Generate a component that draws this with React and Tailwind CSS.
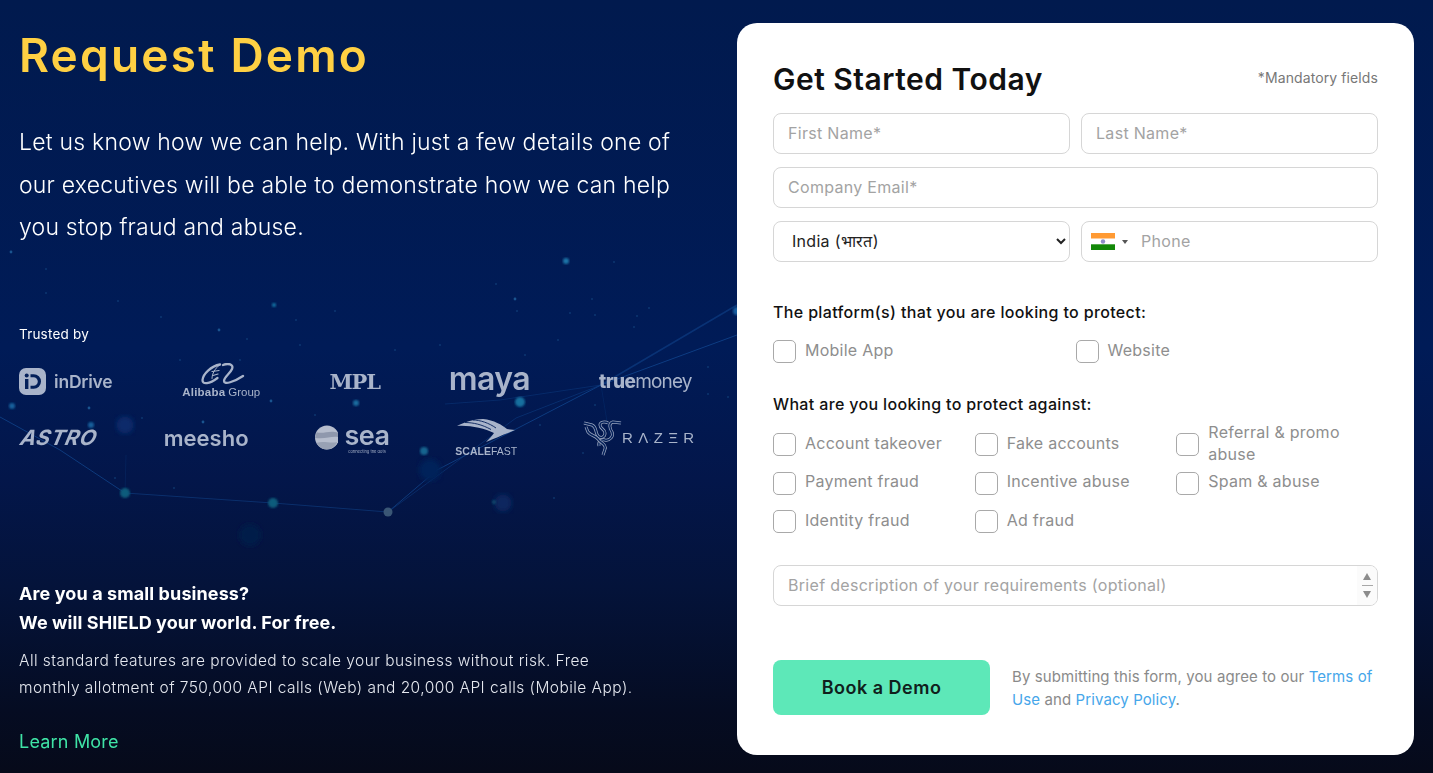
import { useState } from "react";

const stars = [
  [11, 252, 2], [46, 269, 1], [46, 293, 1], [118, 301, 1], [219, 330, 2], [247, 339, 1], [496, 284, 1],
  [515, 299, 2], [517, 311, 1], [525, 355, 1], [558, 340, 1], [614, 262, 1], [592, 299, 1], [570, 313, 1],
  [595, 315, 1], [634, 327, 1], [637, 316, 1], [649, 308, 1], [180, 360, 1], [161, 317, 1], [296, 320, 1],
  [335, 311, 1], [708, 367, 1], [708, 394, 1], [728, 397, 1], [89, 408, 2], [142, 418, 1], [203, 422, 2],
  [271, 401, 2], [583, 453, 1], [315, 415, 1], [554, 498, 1], [595, 405, 1], [174, 488, 1], [115, 478, 1],
  [240, 360, 1], [300, 345, 1], [395, 350, 1], [440, 345, 1], [490, 440, 1], [540, 425, 1], [650, 440, 1],
];
const glows = [
  [12, 406, 3, "#14609c"], [125, 425, 9, "#07296b"], [91, 425, 3, "#14609c"], [520, 402, 5, "#16709f"],
  [424, 451, 4, "#14658f"], [356, 403, 3, "#1a6da0"], [274, 305, 2, "#1a78a8"], [566, 261, 3, "#1f74a8"],
  [737, 311, 4, "#175fa0"], [503, 503, 9, "#07265e"], [125, 493, 5, "#0f5c7c"], [273, 503, 5, "#0f5c7c"],
  [494, 502, 2, "#0f4c70"], [250, 535, 11, "#051b4a"], [430, 470, 11, "#06225a"],
];

function Backdrop() {
  return (
    <svg className="absolute left-0 top-0 h-[773px] w-[737px]" viewBox="0 0 737 773" fill="none">
      <defs>
        <filter id="soft"><feGaussianBlur stdDeviation="1.2" /></filter>
        <filter id="softer"><feGaussianBlur stdDeviation="2.6" /></filter>
      </defs>
      <g stroke="#1858a6" strokeWidth="1" opacity="0.55">
        <path d="M601 385 737 335" />
        <path d="M601 385 737 305" strokeWidth="1.6" opacity="0.7" />
        <path d="M601 385 500 400 445 404" opacity="0.5" />
        <path d="M601 385 437 470 388 512" />
        <path d="M388 512 516 418 601 385" opacity="0.6" />
        <path d="M388 512 273 503 125 493" opacity="0.7" />
        <path d="M125 493 60 450 0 417" />
        <path d="M601 385 610 440" opacity="0.3" />
        <path d="M125 493 126 455" opacity="0.3" />
      </g>
      {glows.map(([x, y, r, c], i) => (
        <circle key={i} cx={x} cy={y} r={r} fill={c} filter={r > 6 ? "url(#softer)" : "url(#soft)"} />
      ))}
      {stars.map(([x, y, r], i) => (
        <circle key={i} cx={x} cy={y} r={r * 0.7} fill="#1a548f" />
      ))}
      <circle cx="388" cy="512" r="4.5" fill="#3a5675" />
    </svg>
  );
}

function InDrive() {
  return (
    <div className="flex w-[94px] items-center gap-[8px]">
      <svg width="27" height="27" viewBox="0 0 27 27">
        <rect width="27" height="27" rx="7" fill="#a9b4ca" />
        <rect x="6" y="11" width="3.4" height="10" fill="#04205a" />
        <circle cx="7.7" cy="7.6" r="2" fill="#04205a" />
        <path d="M11.5 6.2h3.2a7.3 7.3 0 0 1 0 14.6h-3.2v-3h3a4.3 4.3 0 0 0 0-8.6h-3z" fill="#04205a" />
      </svg>
      <span className="text-[17.5px] font-semibold leading-none tracking-[-0.2px]">inDrive</span>
    </div>
  );
}

function Alibaba() {
  return (
    <div className="flex h-[38px] w-[80px] flex-col items-center">
      <svg className="ml-[3px]" width="44" height="23" viewBox="0 0 44 23" fill="none" stroke="#a9b4ca" strokeLinecap="round">
        <path d="M19 1.5C10 3 2 11 1.5 17c-.3 5 7 4 15-2" strokeWidth="2.3" />
        <path d="M19 1.5c-5 4-8 9-8 14" strokeWidth="1" />
        <path d="M11 8.5l7-1M12 12.5l5-1.5" strokeWidth="1.2" />
        <path d="M22 2c5-2 11-1 9 4-1.500 4-8 8-8 12 0 4 10 1 19-5" strokeWidth="2.3" />
      </svg>
      <div className="mt-[1px] flex items-baseline whitespace-nowrap font-['Liberation_Sans',sans-serif] text-[11.5px] leading-none">
        <span className="font-bold tracking-[0.2px]">Alibaba</span>
        <span className="ml-[3px] text-[11.5px]">Group</span>
      </div>
    </div>
  );
}

function Mpl() {
  return (
    <span className="w-[51px] font-['DejaVu_Serif',serif] text-[21px] font-bold leading-none tracking-[-1.2px]">MPL</span>
  );
}

function Maya() {
  return <span className="-mt-[5px] w-[82px] text-[32px] font-semibold leading-none tracking-[-0.6px]">maya</span>;
}

function TrueMoney() {
  return (
    <div className="flex w-[93px] items-baseline whitespace-nowrap leading-none">
      <span className="text-[19px] font-extrabold tracking-[-0.6px]">true</span>
      <span className="text-[19px] tracking-[-0.9px]">money</span>
    </div>
  );
}

function Astro() {
  return (
    <span className="ml-[2px] w-[76px] text-[21px] font-bold italic leading-none tracking-[0.6px] [transform:skewX(-14deg)]">ASTRO</span>
  );
}

function Meesho() {
  return <span className="w-[84px] text-[22px] font-semibold leading-none">meesho</span>;
}

function Sea() {
  return (
    <div className="flex w-[75px] items-center gap-[6px]">
      <svg width="29" height="29" viewBox="0 0 29 29">
        <circle cx="14.5" cy="14.5" r="14.5" fill="#b6bdcd" />
        <path d="M2 8c8 3 16-3 26 1l1 5c-9-2-16 3-29 1z" fill="#8f98ad" />
        <path d="M2 21c8-3 16 1 25-1-3 6-8 9-13 9-5 0-10-3-12-8z" fill="#98a1b4" />
      </svg>
      <div className="flex flex-col items-center pt-[2px]">
        <span className="text-[27px] font-semibold leading-[26px] tracking-[-0.5px]">sea</span>
        <span className="whitespace-nowrap text-[4px] leading-[5px]">connecting the dots</span>
      </div>
    </div>
  );
}

function Scalefast() {
  return (
    <div className="flex h-[38px] w-[60px] flex-col items-center">
      <svg width="60" height="25" viewBox="0 0 60 25">
        <path d="M1 7C9 3 18 0 27 0c11 1 19 6 24 10l8 1-7 3c-6 2-14 6-22 9 3-3 6-6 8-9C28 9 13 6 1 7z" fill="#a9b4ca" />
        <path d="M9 3.500c8 0 17 2 26 7M17 1c7 0 16 3 23 8" stroke="#04205a" strokeWidth="0.9" fill="none" />
      </svg>
      <div className="mt-[2px] whitespace-nowrap font-['Liberation_Sans',sans-serif] text-[10.5px] leading-none">
        <span className="font-bold">SCALE</span>FAST
      </div>
    </div>
  );
}

const razerCoils = [
  "M1 4 9 6C14 8 12 14 15 17 18 20 22 18 22 14 22 10 17 10 17 6 17 3 22 2 25 4",
  "M38 4 30 3C25 4 27 10 29 13 31 17 27 22 22 21 18 20 15 23 16 27",
  "M20 36 22 30C24 25 17 24 15 20 12 16 8 17 5 13L3 8",
];

function Razer() {
  return (
    <div className="flex w-[109px] items-center">
      <svg className="shrink-0" width="39" height="38" viewBox="0 0 39 38" fill="none">
        {razerCoils.map((d) => (
          <g key={d}>
            <path d={d} stroke="#98a4bd" strokeWidth="3" />
            <path d={d} stroke="#04205a" strokeWidth="1.5" />
          </g>
        ))}
      </svg>
      <span className="whitespace-nowrap font-['Liberation_Sans',sans-serif] text-[15px] leading-none tracking-[5.4px]">RΛZΞR</span>
    </div>
  );
}

function IndiaFlag() {
  return (
    <svg width="24" height="17" viewBox="0 0 24 17">
      <rect width="24" height="5.7" fill="#ff9a33" />
      <rect y="5.7" width="24" height="5.6" fill="#ffffff" />
      <rect y="11.3" width="24" height="5.7" fill="#138808" />
      <circle cx="12" cy="8.5" r="2.2" fill="#8f8fc9" />
    </svg>
  );
}

function CheckItem({ label, checked, onChange }) {
  return (
    <label className="flex items-center gap-[9px] text-[16px] leading-[22px] tracking-[0.25px] text-[#8e8e8e]">
      <input
        type="checkbox"
        checked={checked}
        onChange={onChange}
        className="h-[23px] w-[23px] shrink-0 appearance-none rounded-[5px] border border-[#a9a9a9] bg-white checked:bg-[#5de8b8]"
      />
      <span className="-mb-[9px] -mt-[13px]">{label}</span>
    </label>
  );
}

const inputClass =
  "h-[41px] w-full rounded-[8px] border border-[#d6d6d6] bg-white px-[14px] pb-[2px] text-[16px] tracking-[0.3px] text-[#333] outline-none placeholder:text-[#a3a3a3]";

const platforms = ["Mobile App", "Website"];
const threats = [
  "Account takeover", "Fake accounts", "Referral & promo abuse",
  "Payment fraud", "Incentive abuse", "Spam & abuse",
  "Identity fraud", "Ad fraud",
];

function App() {
  const [checked, setChecked] = useState({});

  const toggle = (name) => {
    setChecked({ ...checked, [name]: !checked[name] });
  };

  return (
    <div className="relative flex h-[773px] w-full overflow-hidden bg-[linear-gradient(180deg,#011a4e_0%,#001b57_45%,#03164a_62%,#04133a_76%,#050c22_92%,#060a1a_100%)] font-['Inter',sans-serif]">
      <Backdrop />

      {/* left column */}
      <div className="relative flex w-[737px] shrink-0 flex-col pl-[19px] pr-[45px] text-white">
        <h1 className="mt-[26px] text-[46px] font-semibold leading-[58px] tracking-[2.2px] text-[#ffd043]">Request Demo</h1>
        <p className="mt-[37px] text-[23px] font-light leading-[42.5px] tracking-[0.22px]">
          Let us know how we can help. With just a few details one of our executives will be able to demonstrate how we can help you stop fraud and abuse.
        </p>

        <div className="mt-[75px] text-[13.5px] leading-[20px] tracking-[0.2px]">Trusted by</div>
        <div className="mt-[18px] flex flex-col gap-[16px] text-[#a9b4ca]">
          <div className="flex h-[40px] items-center justify-between">
            <InDrive />
            <Alibaba />
            <Mpl />
            <Maya />
            <TrueMoney />
          </div>
          <div className="flex h-[40px] items-center justify-between">
            <Astro />
            <Meesho />
            <Sea />
            <Scalefast />
            <Razer />
          </div>
        </div>

        <div className="mt-[121px] text-[18px] font-bold leading-[29px] tracking-[0.1px]">
          Are you a small business?
          <br />
          We will SHIELD your world. For free.
        </div>
        <p className="mt-[10px] max-w-[615px] text-[15.5px] font-light leading-[27px] tracking-[0.45px] text-[#e6e9f0]">
          All standard features are provided to scale your business without risk. Free monthly allotment of 750,000 API calls (Web) and 20,000 API calls (Mobile App).
        </p>
        <a href="#learn" className="mt-[27px] text-[18px] leading-[28px] tracking-[0.2px] text-[#3fe3a6]">Learn More</a>
      </div>

      {/* form card */}
      <div className="relative mt-[23px] h-[732px] w-[677px] rounded-[20px] bg-white px-[36px] pt-[36px]">
        <form noValidate onSubmit={(e) => e.preventDefault()}>
          <div className="flex h-[40px] items-center justify-between">
            <h2 className="text-[30px] font-semibold leading-[40px] tracking-[0.5px] text-[#111]">Get Started Today</h2>
            <span className="pb-[3px] text-[14px] tracking-[0.1px] text-[#777]">*Mandatory fields</span>
          </div>

          <div className="mt-[14px] flex flex-col gap-[13px]">
            <div className="grid grid-cols-2 gap-[11px]">
              <input className={inputClass} type="text" placeholder="First Name*" />
              <input className={inputClass} type="text" placeholder="Last Name*" />
            </div>
            <input className={inputClass} type="email" placeholder="Company Email*" />
            <div className="grid grid-cols-2 gap-[11px]">
              <select className="h-[41px] w-full rounded-[8px] border border-[#d6d6d6] bg-white px-[14px] pb-[2px] text-[16px] tracking-[0.3px] text-[#222] outline-none" defaultValue="India">
                <option value="India">India (भारत)</option>
              </select>
              <div className="flex h-[41px] items-center rounded-[8px] border border-[#d6d6d6] bg-white pl-[9px]">
                <IndiaFlag />
                <span className="ml-[7px] h-0 w-0 border-x-[3px] border-t-[4px] border-x-transparent border-t-[#555]" />
                <input className="ml-[13px] h-full min-w-0 flex-1 rounded-[8px] bg-transparent pb-[2px] text-[16px] tracking-[0.3px] outline-none placeholder:text-[#a3a3a3]" type="tel" placeholder="Phone" />
              </div>
            </div>
          </div>

          <div className="mt-[39px] text-[16px] font-medium leading-[22px] tracking-[0.35px] text-[#111]">The platform(s) that you are looking to protect:</div>
          <div className="mt-[17px] grid grid-cols-2">
            {platforms.map((name) => (
              <CheckItem key={name} label={name} checked={!!checked[name]} onChange={() => toggle(name)} />
            ))}
          </div>

          <div className="mt-[30px] text-[16px] font-medium leading-[22px] tracking-[0.35px] text-[#111]">What are you looking to protect against:</div>
          <div className="mt-[18px] grid grid-cols-3 gap-y-[15.5px]">
            {threats.map((name) => (
              <CheckItem key={name} label={name} checked={!!checked[name]} onChange={() => toggle(name)} />
            ))}
          </div>

          <div className="relative mt-[32px] h-[41px] w-full">
            <input className={inputClass} type="text" placeholder="Brief description of your requirements (optional)" />
            <div className="absolute right-[1px] top-[1px] flex h-[39px] w-[20px] flex-col items-center justify-center gap-[5px] rounded-r-[7px] bg-[#fbfbfb]">
              <span className="h-0 w-0 border-x-[4.5px] border-b-[7px] border-x-transparent border-b-[#8c8c8c]" />
              <span className="h-px w-[11px] bg-[#a8a8a8]" />
              <span className="h-0 w-0 border-x-[4.5px] border-t-[7px] border-x-transparent border-t-[#8c8c8c]" />
            </div>
          </div>

          <div className="mt-[54px] flex items-center gap-[22px]">
            <button type="submit" className="h-[55px] w-[217px] shrink-0 rounded-[8px] bg-[#5de8b8] text-[18px] font-semibold tracking-[0.5px] text-[#10201c]">
              Book a Demo
            </button>
            <p className="text-[15px] leading-[23px] tracking-[0.1px] text-[#8a8a8a]">
              By submitting this form, you agree to our <a href="#terms" className="text-[#46a6ea]">Terms of Use</a> and <a href="#privacy" className="text-[#46a6ea]">Privacy Policy</a>.
            </p>
          </div>
        </form>
      </div>
    </div>
  );
}

export default App;
